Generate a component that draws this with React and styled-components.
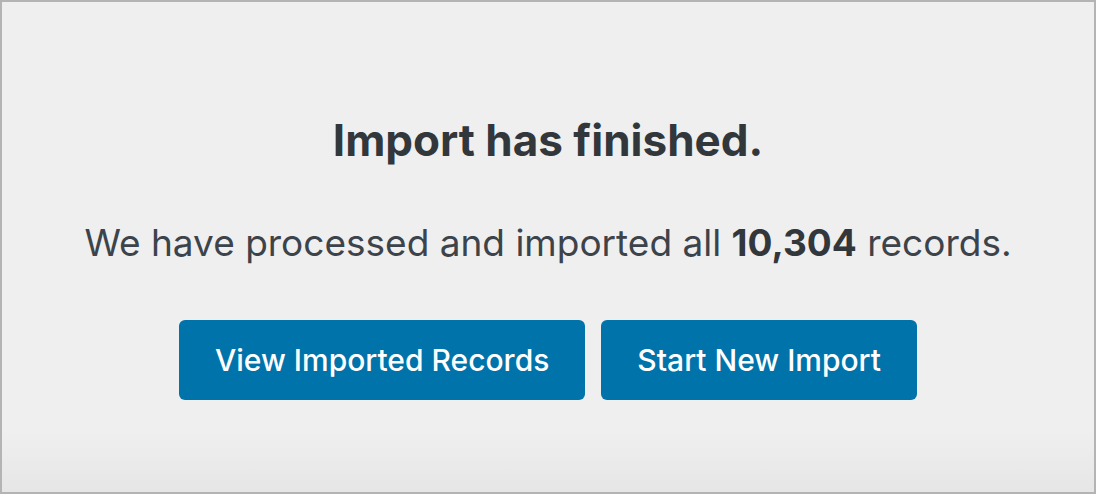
import styled, { createGlobalStyle } from "styled-components";

const GlobalStyle = createGlobalStyle`
	html, body {
		margin: 0;
		padding: 0;
		background: #ffffff;
	}
	* {
		box-sizing: border-box;
	}
`

export default function App() {
	return (
		<>
			<GlobalStyle />
			<Frame>
				<Title>Import has finished.</Title>
				<Message>
					We have processed and imported all <strong>10,304</strong> records.
				</Message>
				<Actions>
					<ActionButton>View Imported Records</ActionButton>
					<ActionButton>Start New Import</ActionButton>
				</Actions>
			</Frame>
		</>
	)
}

const Frame = styled.main`
	width: 1096px;
	height: 494px;
	border: 2px solid #b4b4b4;
	background: linear-gradient(to bottom, #efefef 0, #efefef 430px, #e6e6e6 100%);
	font-family: Inter, "Noto Sans", sans-serif;
	color: #32373c;
	display: flex;
	flex-direction: column;
	align-items: center;
	padding-top: 108px;
`

const Title = styled.h1`
	margin: 0;
	font-size: 44px;
	line-height: 60px;
	font-weight: 700;
	letter-spacing: 0;
`

const Message = styled.p`
	margin: 48px 0 0;
	font-size: 37px;
	line-height: 50px;
	font-weight: 400;
	color: #3c434a;

	strong {
		font-weight: 700;
		color: #32373c;
	}
`

const Actions = styled.div`
	display: flex;
	gap: 16px;
	margin-top: 52px;
`

const ActionButton = styled.button`
	height: 80px;
	padding: 0 36px;
	border: none;
	border-radius: 6px;
	background: #0073aa;
	color: #ffffff;
	font-family: Inter, "Noto Sans", sans-serif;
	font-size: 30px;
	font-weight: 500;
	cursor: pointer;
`
